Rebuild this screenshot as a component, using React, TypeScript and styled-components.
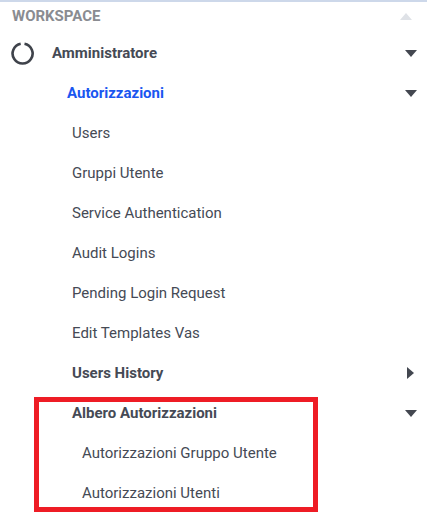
import React from "react";
import styled, { createGlobalStyle } from "styled-components";

const Global = createGlobalStyle`
  html, body { margin: 0; padding: 0; background: #fff; }
  body { font-family: Roboto, "Liberation Sans", sans-serif; }
`;

const Panel = styled.div`
  position: relative;
  width: 427px;
  height: 522px;
  box-sizing: border-box;
  border-top: 2px solid #cdd8ea;
  overflow: hidden;
`;

const SectionHeader = styled.div`
  display: flex;
  align-items: center;
  justify-content: space-between;
  height: 31px;
  padding: 0 15px 3px 12px;
  box-sizing: border-box;
  color: #8a8c91;
  font-size: 15px;
  font-weight: 700;
`;

const Row = styled.div<{ $indent: number }>`
  display: flex;
  align-items: center;
  justify-content: space-between;
  height: 40px;
  padding-left: ${(p) => p.$indent}px;
  padding-right: 10px;
  box-sizing: border-box;
`;

const Label = styled.span<{ $bold?: boolean; $active?: boolean }>`
  font-size: 15px;
  font-weight: ${(p) => (p.$bold || p.$active ? 700 : 400)};
  color: ${(p) => (p.$active ? "#1a56f0" : "#454a55")};
`;

const IconLabel = styled.span`
  display: flex;
  align-items: center;
  gap: 18px;
`;

const Arrow = styled.svg`
  display: block;
  flex: none;
`;

const RightArrow = styled(Arrow)`
  margin-right: 3px;
`;

const Highlight = styled.div`
  position: absolute;
  left: 34px;
  top: 395px;
  width: 284px;
  height: 115px;
  box-sizing: border-box;
  border: 5px solid #ee1c25;
  pointer-events: none;
`;

const Down = () => (
  <Arrow width="12" height="7" viewBox="0 0 12 7">
    <path d="M0 0H12L6 7Z" fill="#434750" />
  </Arrow>
);

const Right = () => (
  <RightArrow width="7" height="12" viewBox="0 0 7 12">
    <path d="M0 0L7 6L0 12Z" fill="#434750" />
  </RightArrow>
);

const Up = () => (
  <Arrow width="12" height="7" viewBox="0 0 12 7">
    <path d="M6 0L12 7H0Z" fill="#dfe2e7" />
  </Arrow>
);

const Spinner = () => (
  <Arrow width="23" height="23" viewBox="0 0 23 23">
    <path
      d="M13.5 1.7A10 10 0 1 1 9.7 1.7"
      fill="none"
      stroke="#3f434b"
      strokeWidth="2.6"
    />
  </Arrow>
);

const plain = [
  "Users",
  "Gruppi Utente",
  "Service Authentication",
  "Audit Logins",
  "Pending Login Request",
  "Edit Templates Vas",
];

export default function App() {
  return (
    <Panel>
      <Global />
      <SectionHeader>
        WORKSPACE
        <Up />
      </SectionHeader>
      <Row $indent={11}>
        <IconLabel>
          <Spinner />
          <Label $bold>Amministratore</Label>
        </IconLabel>
        <Down />
      </Row>
      <Row $indent={67}>
        <Label $active>Autorizzazioni</Label>
        <Down />
      </Row>
      {plain.map((t) => (
        <Row $indent={72} key={t}>
          <Label>{t}</Label>
        </Row>
      ))}
      <Row $indent={72}>
        <Label $bold>Users History</Label>
        <Right />
      </Row>
      <Row $indent={72}>
        <Label $bold>Albero Autorizzazioni</Label>
        <Down />
      </Row>
      <Row $indent={82}>
        <Label>Autorizzazioni Gruppo Utente</Label>
      </Row>
      <Row $indent={82}>
        <Label>Autorizzazioni Utenti</Label>
      </Row>
      <Highlight />
    </Panel>
  );
}
